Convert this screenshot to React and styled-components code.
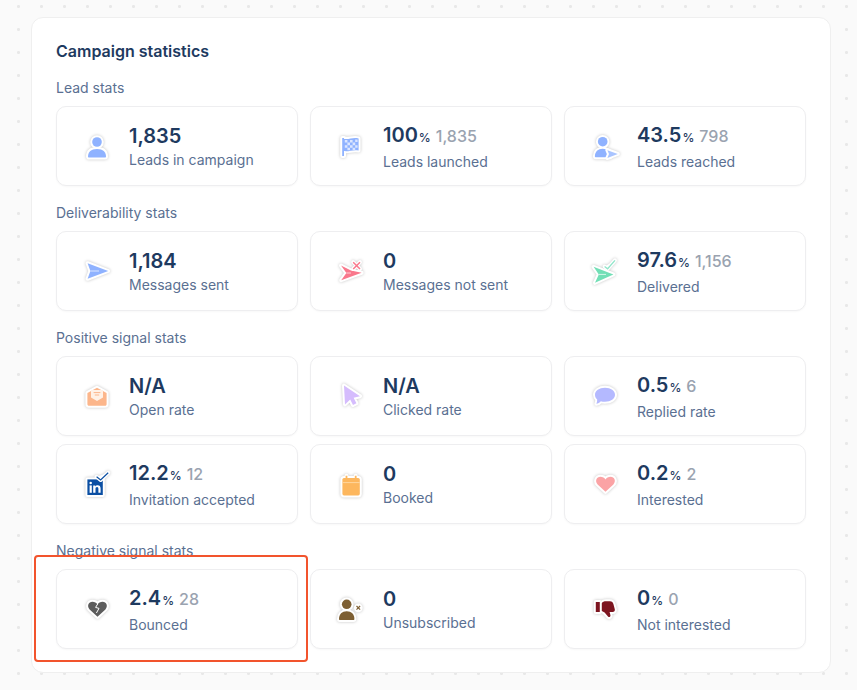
import React from "react";
import styled, { createGlobalStyle } from "styled-components";

const Global = createGlobalStyle`
  html, body { margin: 0; padding: 0; height: 690px; overflow: hidden; }
  body {
    font-family: Inter, "Noto Sans", sans-serif;
    background-color: #fafafa;
    background-image: radial-gradient(circle at center, #e8e8e8 0, #e8e8e8 1.2px, transparent 1.8px);
    background-size: 23px 23px;
    background-position: 7px -5px;
  }
`;
const Page = styled.main`
  padding: 17px 26px 0 31px;
`;
const Panel = styled.section`
  box-sizing: border-box;
  width: 800px;
  height: 656px;
  padding: 21px 24px 24px;
  background: #fff;
  border: 1px solid #efefef;
  border-radius: 12px;
  display: flex;
  flex-direction: column;
  gap: 17px;
`;
const Title = styled.h2`
  margin: 0 0 -2px;
  font-size: 16px;
  line-height: 24px;
  font-weight: 600;
  color: #1e3a5f;
`;
const Group = styled.div`
  display: flex;
  flex-direction: column;
  gap: 8px;
`;
const GroupLabel = styled.div`
  font-size: 14px;
  line-height: 20px;
  color: #5a7092;
`;
const Grid = styled.div`
  display: grid;
  grid-template-columns: repeat(3, 242px);
  column-gap: 12px;
  row-gap: 8px;
`;
const Card = styled.article`
  position: relative;
  box-sizing: border-box;
  height: 80px;
  padding: 0 24px;
  display: flex;
  align-items: center;
  gap: 16px;
  background: #fff;
  border: 1px solid #eeeef0;
  border-radius: 10px;
  box-shadow: 0 1px 2px rgba(16, 24, 40, 0.03);
`;
const Highlight = styled.div`
  position: absolute;
  top: -15px;
  left: -23px;
  right: -11px;
  bottom: -14px;
  border: 2px solid #f2542d;
  border-radius: 4px;
  pointer-events: none;
`;
const IconSvg = styled.svg`
  flex: none;
  width: 32px;
  height: 32px;
  filter: drop-shadow(0 0.5px 1.5px rgba(0, 0, 0, 0.24));
`;
const Outline = styled.g`
  & * {
    fill: #fff;
    stroke: #fff;
    stroke-width: 4px;
    stroke-linejoin: round;
    stroke-linecap: round;
  }
`;
const Text = styled.div`
  display: flex;
  flex-direction: column;
`;
const Value = styled.div`
  display: flex;
  align-items: baseline;
  font-size: 20px;
  line-height: 28px;
  font-weight: 600;
  color: #1e3a5f;
`;
const Unit = styled.span`
  font-size: 12px;
  font-weight: 500;
  margin-left: 1px;
`;
const Count = styled.span`
  font-size: 16px;
  font-weight: 500;
  color: #9aa3b0;
  margin-left: 5px;
`;
const Caption = styled.div`
  font-size: 14px;
  line-height: 20px;
  color: #5a7092;
`;

const Sticker = ({ shape, over, children }) => (
  <IconSvg viewBox="0 0 32 32" aria-hidden="true">
    <Outline>{shape}</Outline>
    {shape}
    {over && <Outline>{over}</Outline>}
    {over}
    {children}
  </IconSvg>
);

const personShape = (x, y, c, w = 9) => (
  <>
    <circle cx={x} cy={y} r="4.8" fill={c} />
    <path d={`M${x - w} ${y + 14.6} c0 -4.6 3 -7.6 ${w} -7.6 s${w} 3 ${w} 7.6 c0 .6 -.4 1 -1 1 h${-(2 * w - 2)} c-.6 0 -1 -.4 -1 -1 z`} fill={c} />
  </>
);

const heart = "M16.5 23.8 L8.6 16.4 C5.6 13.2 7.6 8.8 11.4 8.8 C13.6 8.8 15.4 9.8 16.5 11.4 C17.6 9.8 19.4 8.8 21.6 8.8 C25.4 8.8 27.4 13.2 24.4 16.4 Z";

const icons = {
  lead: <Sticker shape={personShape(16, 12, "#8fb2ff")} />,
  flag: (
    <Sticker
      shape={
        <>
          <rect x="7.2" y="8" width="1.8" height="18" fill="#8fb2ff" />
          <path d="M8 8.4 C13 10.2 18 6.6 23.6 8.4 V20.6 C18 19 13 22.4 8 20.8 Z" fill="#8fb2ff" />
        </>
      }
    >
      <path
        d="M9.8 10h2.6v2.6H9.8zM15 10h2.6v2.6H15zM20.2 9.4h2.4v2.6h-2.4zM12.4 12.6H15v2.6h-2.6zM17.6 12.6h2.6v2.6h-2.6zM9.8 15.2h2.6v2.6H9.8zM15 15.2h2.6v2.6H15zM20.2 15.2h2.4v2.6h-2.4zM12.4 17.8H15v2.4h-2.6zM17.6 17.8h2.6V20h-2.6z"
        fill="#dbe6ff"
      />
    </Sticker>
  ),
  reached: (
    <Sticker
      shape={personShape(13.7, 11.7, "#8fb2ff", 7.8)}
      over={<path d="M18.4 20.2 L28.8 24 L18.4 28 L20 24 Z" fill="#a9c4ff" />}
    />
  ),
  send: (
    <Sticker shape={<path d="M6.6 8.2 L27.2 16 L6.6 23.8 L9.4 16 Z" fill="#8fb2ff" />}>
      <path d="M9.4 16 H18" stroke="#e4ecff" strokeWidth="0.9" />
    </Sticker>
  ),
  notSent: (
    <Sticker
      shape={<path d="M6 10.6 L16 15.6 L26.6 17.8 L6.2 25.2 L11.4 18 Z" fill="#f9788c" />}
      over={<path d="M18.2 7.2 L25 14 M25 7.2 L18.2 14" fill="none" stroke="#f9788c" strokeWidth="1.5" />}
    >
      <path d="M11.4 18 H16" stroke="#ffe4e8" strokeWidth="0.8" />
    </Sticker>
  ),
  delivered: (
    <Sticker
      shape={<path d="M4.6 11.8 L24.4 19.4 L6 27.8 L9.8 19.4 Z" fill="#72dfb6" />}
      over={<path d="M15.6 11.6 L18.6 13.8 L26 5.4" fill="none" stroke="#8fe5c9" strokeWidth="1.3" />}
    >
      <path d="M9.8 19.4 H17" stroke="#e0f9ef" strokeWidth="0.9" />
    </Sticker>
  ),
  open: (
    <Sticker
      shape={
        <path d="M6.4 13 L16 7.8 L25.6 13 V24 C25.6 25.2 25 25.8 24 25.8 H8 C7 25.8 6.4 25.2 6.4 24 Z" fill="#fcb68b" />
      }
    >
      <path d="M10 10 H22 V17.6 L16 21 L10 17.6 Z" fill="#fff1e6" />
      <path d="M12.6 12.6 H19.4 M13.8 15 H18.2" stroke="#fcb68b" strokeWidth="1" />
    </Sticker>
  ),
  click: (
    <Sticker shape={<path d="M9 5.6 L25 16.2 L18.6 17.8 L21.4 23.2 L18 25 L15.2 19.4 L10 24.4 Z" fill="#d5bcfd" />} />
  ),
  linkedin: (
    <Sticker
      shape={<rect x="6.4" y="11.4" width="15.4" height="15.6" fill="#0b4fa3" />}
      over={<path d="M15.6 8.8 L19.6 12 L27.2 4.8" fill="none" stroke="#0b4fa3" strokeWidth="1.2" />}
    >
      <path d="M8.6 17.4h2.2v7.4H8.6z" fill="#fff" />
      <circle cx="9.7" cy="15" r="1.25" fill="#fff" />
      <path d="M12.2 17.4h2.1v1.1c.5-.8 1.3-1.3 2.4-1.3 2 0 2.9 1.2 2.9 3.3v4.3h-2.2v-3.9c0-1.1-.4-1.8-1.3-1.8-1 0-1.6.7-1.6 1.9v3.8h-2.3z" fill="#fff" />
    </Sticker>
  ),
  booked: (
    <Sticker
      shape={
        <>
          <rect x="7.4" y="10" width="17.4" height="17.4" rx="1.6" fill="#fdb75e" />
          <path d="M11.5 7.8 V10 M20.7 7.8 V10" fill="none" stroke="#fdb75e" strokeWidth="1.8" />
        </>
      }
    >
      <path d="M7.4 14.6 H24.8" stroke="#ffd9a6" strokeWidth="0.9" />
    </Sticker>
  ),
  replied: (
    <Sticker
      shape={<path d="M16 7.8 C21.8 7.8 26 10.8 26 14.8 C26 18.8 21.8 21.8 16 21.8 C14.4 21.8 13 21.6 11.8 21.2 C10.6 22.6 9 23.6 7.4 23.8 C8 22.6 8.2 21.2 8.2 19.6 C6.8 18.4 6 16.8 6 14.8 C6 10.8 10.2 7.8 16 7.8 Z" fill="#b4b9ff" />}
    />
  ),
  interested: <Sticker shape={<path d={heart} fill="#fba3a5" />} />,
  bounced: (
    <Sticker shape={<path d={heart} fill="#5c5c5c" />}>
      <path d="M16.8 10.8 L14.6 14.4 L18 15.4 L15.4 20" fill="none" stroke="#fff" strokeWidth="1" />
    </Sticker>
  ),
  unsub: (
    <Sticker
      shape={personShape(11.7, 11.3, "#7d5f33", 7.7)}
      over={<circle cx="23.3" cy="14.8" r="2.4" fill="#fff" />}
    >
      <path d="M21.5 13 L25.1 16.6 M25.1 13 L21.5 16.6" stroke="#7d5f33" strokeWidth="1.2" />
    </Sticker>
  ),
  notInterested: (
    <Sticker
      shape={
        <>
          <rect x="6.8" y="9" width="4" height="10" fill="#7d1520" />
          <path d="M12.8 10.2 C13.6 8.8 15 8.2 17 8.2 H21 C23 8.2 24 9.4 24.4 11 L25.8 16.2 C26.2 17.8 25.2 19 23.6 19 H20.6 L21.4 22 C21.8 23.6 20.4 24.6 19.2 23.8 L15.6 19.6 L12.8 18 Z" fill="#7d1520" />
        </>
      }
    />
  ),
};

const groups = [
  {
    label: "Lead stats",
    items: [
      { icon: "lead", value: "1,835", caption: "Leads in campaign" },
      { icon: "flag", value: "100", unit: "%", count: "1,835", caption: "Leads launched" },
      { icon: "reached", value: "43.5", unit: "%", count: "798", caption: "Leads reached" },
    ],
  },
  {
    label: "Deliverability stats",
    items: [
      { icon: "send", value: "1,184", caption: "Messages sent" },
      { icon: "notSent", value: "0", caption: "Messages not sent" },
      { icon: "delivered", value: "97.6", unit: "%", count: "1,156", caption: "Delivered" },
    ],
  },
  {
    label: "Positive signal stats",
    items: [
      { icon: "open", value: "N/A", caption: "Open rate" },
      { icon: "click", value: "N/A", caption: "Clicked rate" },
      { icon: "replied", value: "0.5", unit: "%", count: "6", caption: "Replied rate" },
      { icon: "linkedin", value: "12.2", unit: "%", count: "12", caption: "Invitation accepted" },
      { icon: "booked", value: "0", caption: "Booked" },
      { icon: "interested", value: "0.2", unit: "%", count: "2", caption: "Interested" },
    ],
  },
  {
    label: "Negative signal stats",
    items: [
      { icon: "bounced", value: "2.4", unit: "%", count: "28", caption: "Bounced", marked: true },
      { icon: "unsub", value: "0", caption: "Unsubscribed" },
      { icon: "notInterested", value: "0", unit: "%", count: "0", caption: "Not interested" },
    ],
  },
];

export default function App() {
  return (
    <Page>
      <Global />
      <Panel>
        <Title>Campaign statistics</Title>
        {groups.map((g) => (
          <Group key={g.label}>
            <GroupLabel>{g.label}</GroupLabel>
            <Grid>
              {g.items.map((it) => (
                <Card key={it.caption}>
                  {icons[it.icon]}
                  <Text>
                    <Value>
                      {it.value}
                      {it.unit && <Unit>{it.unit}</Unit>}
                      {it.count && <Count>{it.count}</Count>}
                    </Value>
                    <Caption>{it.caption}</Caption>
                  </Text>
                  {it.marked && <Highlight />}
                </Card>
              ))}
            </Grid>
          </Group>
        ))}
      </Panel>
    </Page>
  );
}
